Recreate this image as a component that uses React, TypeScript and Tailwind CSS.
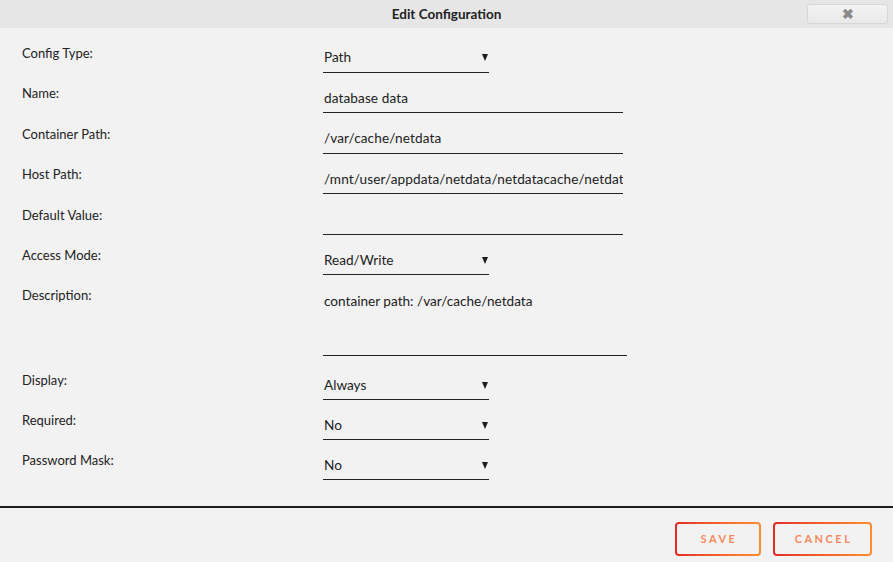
import React from "react";

const font = { fontFamily: "Lato, 'Noto Sans', sans-serif" };

function Arrow() {
  return (
    <svg width="6" height="7" viewBox="0 0 6 7" className="shrink-0">
      <polygon points="0,0 6,0 3,7" fill="#1c1c1c" />
    </svg>
  );
}

function SelectBox({ value }: { value: string }) {
  return (
    <div className="w-[166px] h-[28px] border-b border-[#222] flex items-center justify-between pl-[1px] pr-[1px] pb-[1px]">
      <span className="text-[13.6px] text-[#222]">{value}</span>
      <Arrow />
    </div>
  );
}

function TextBox({ value }: { value: string }) {
  return (
    <div className="w-[300px] h-[28px] border-b border-[#222] flex items-center pl-[1px] pb-[1px] overflow-hidden whitespace-nowrap">
      <span className="text-[13.6px] text-[#222] tracking-[0.1px]">{value}</span>
    </div>
  );
}

function Row({ label, children }: { label: string; children: React.ReactNode }) {
  return (
    <div className="flex items-start">
      <div className="w-[323px] shrink-0 pl-[22px] text-[13px] leading-[17px] text-[#222]">{label}</div>
      {children}
    </div>
  );
}

export default function App() {
  return (
    <div className="w-[893px] h-[562px] bg-[#f2f2f2] flex flex-col overflow-hidden" style={font}>
      <div className="h-[28px] bg-[#e6e6e6] relative flex items-center justify-center shrink-0">
        <span className="text-[13.5px] font-bold text-[#222]">Edit Configuration</span>
        <div className="absolute left-[807px] top-[4px] w-[81px] h-[20px] rounded-[3px] border border-[#d6d6d6] bg-gradient-to-b from-[#f3f3f3] to-[#e9e9e9] flex items-center justify-center">
          <span className="text-[14px] font-bold text-[#8a8a8a] leading-none">✖</span>
        </div>
      </div>

      <div className="flex flex-col pt-[16.5px]">
        <div className="flex flex-col gap-[12.6px]">
          <Row label="Config Type:"><SelectBox value="Path" /></Row>
          <Row label="Name:"><TextBox value="database data" /></Row>
          <Row label="Container Path:"><TextBox value="/var/cache/netdata" /></Row>
          <Row label="Host Path:"><TextBox value="/mnt/user/appdata/netdata/netdatacache/netdata" /></Row>
          <Row label="Default Value:"><TextBox value="" /></Row>
          <Row label="Access Mode:"><SelectBox value="Read/Write" /></Row>
        </div>
        <div className="mt-[12px]">
          <Row label="Description:">
            <div className="w-[304px] h-[69px] border-b border-[#222] pl-[1px] pt-[1px]">
              <span className="text-[13.6px] leading-[17px] text-[#222]">container path: /var/cache/netdata</span>
            </div>
          </Row>
        </div>
        <div className="flex flex-col gap-[12px] mt-[16px]">
          <Row label="Display:"><SelectBox value="Always" /></Row>
          <Row label="Required:"><SelectBox value="No" /></Row>
          <Row label="Password Mask:"><SelectBox value="No" /></Row>
        </div>
      </div>

      <div className="mt-[26px] border-t-2 border-[#1c1c1c]" />

      <div className="flex justify-end gap-[12px] pr-[21px] pt-[14px]">
        <div className="w-[86px] h-[34px] rounded-[4px] p-[2px] bg-gradient-to-r from-[#e22828] to-[#ff8c2f]">
          <div className="w-full h-full rounded-[2px] bg-[#f2f2f2] flex items-center justify-center">
            <span className="text-[11px] font-bold tracking-[2.5px] text-[#f7895c] pl-[2px]">SAVE</span>
          </div>
        </div>
        <div className="w-[99px] h-[34px] rounded-[4px] p-[2px] bg-gradient-to-r from-[#e22828] to-[#ff8c2f]">
          <div className="w-full h-full rounded-[2px] bg-[#f2f2f2] flex items-center justify-center">
            <span className="text-[11px] font-bold tracking-[2.5px] text-[#f7895c] pl-[2px]">CANCEL</span>
          </div>
        </div>
      </div>
    </div>
  );
}
